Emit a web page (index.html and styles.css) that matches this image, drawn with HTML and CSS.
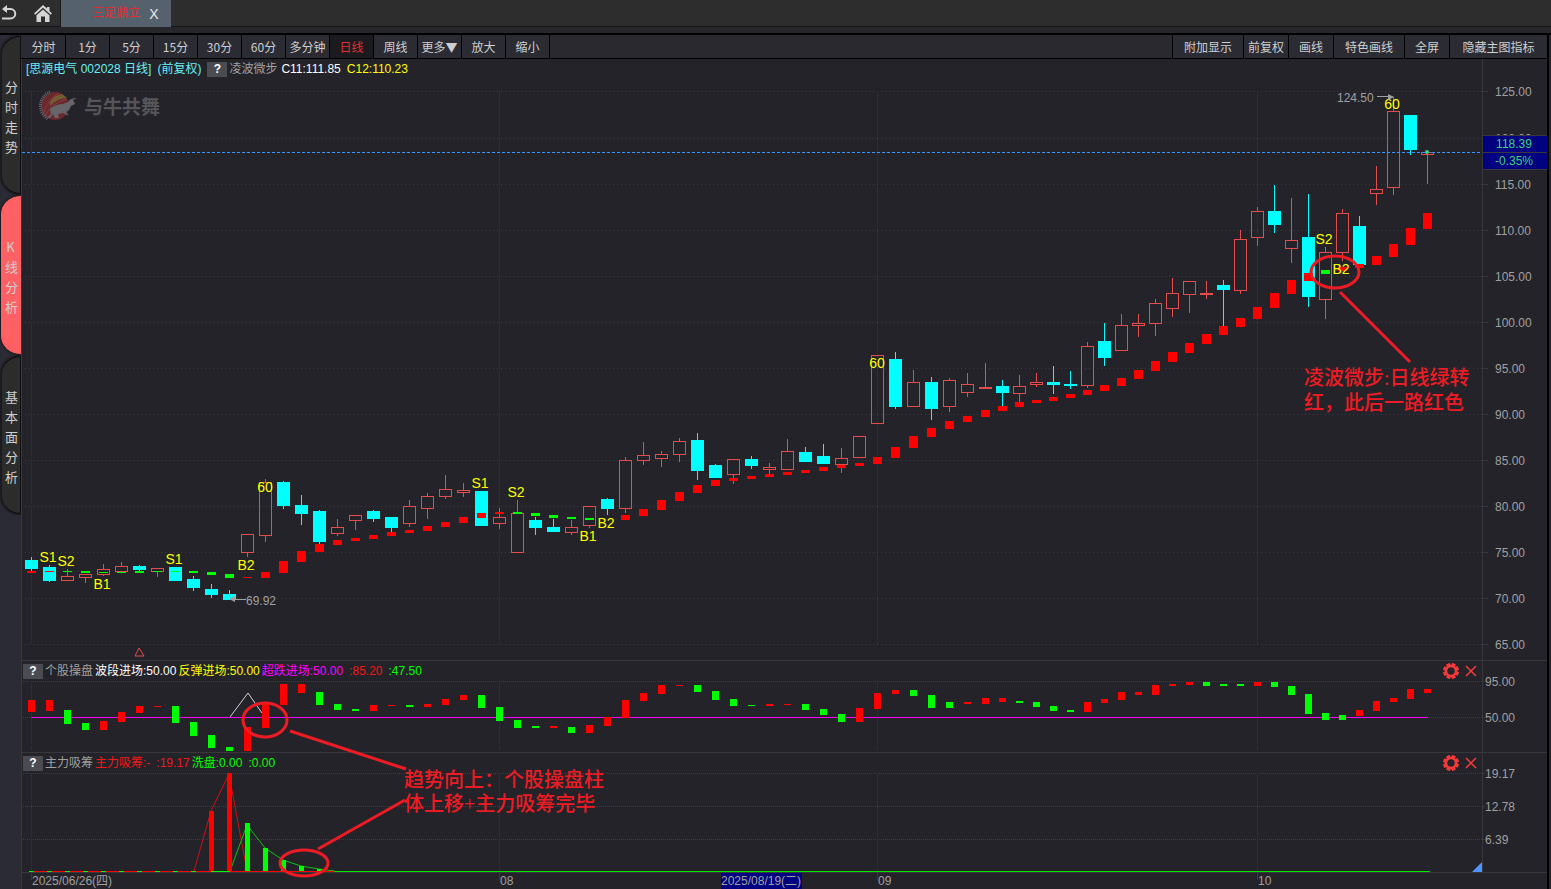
FILE: index.html
```
<!DOCTYPE html>
<html lang="zh-CN">
  <head>
    <meta charset="UTF-8" />
    <meta name="viewport" content="width=device-width, initial-scale=1.0" />
    <title>思源电气 002028 日线</title>

    <link rel="stylesheet" href="styles.css">
  </head>
  <body>
    <header class="topbar">
      <button class="icon-btn" aria-label="返回">
        <svg width="20" height="26" viewBox="0 0 20 26">
          <path d="M5 9H10.5A4.500 4.500 0 0 1 10.500 18.500H2" fill="none" stroke="#d4d4d4" stroke-width="2" />
          <path d="M2 9L7 5V13Z" fill="#d4d4d4" />
        </svg>
      </button>
      <button class="icon-btn is-home" aria-label="首页">
        <svg width="18" height="18" viewBox="0 0 18 18" fill="#d4d4d4">
          <path d="M9 0L13 3.600V2H15.500V6L18 8.500L16.800 9.800L9 2.800L1.200 9.800L0 8.500Z" />
          <path d="M9 4.500L15.500 10.300V17H11V11.500H7V17H2.500V10.300Z" />
        </svg>
      </button>
      <div class="tab">
        <a href="#">三足鼎立</a>
        <button aria-label="关闭">X</button>
      </div>
    </header>

    <main>
      <nav class="side">
        <button>分时走势</button>
        <button class="is-active">K线分析</button>
        <button>基本面分析</button>
      </nav>

      <section class="workspace">
        <div class="toolbar">
          <button>分时</button>
          <button>1分</button>
          <button>5分</button>
          <button>15分</button>
          <button>30分</button>
          <button>60分</button>
          <button>多分钟</button>
          <button class="is-active">日线</button>
          <button>周线</button>
          <button>更多▼</button>
          <button>放大</button>
          <button>缩小</button>
          <span class="spacer"></span>
          <button class="is-wide">附加显示</button>
          <button>前复权</button>
          <button>画线</button>
          <button class="is-wide">特色画线</button>
          <button>全屏</button>
          <button class="is-wider">隐藏主图指标</button>
        </div>

        <div class="stage">
          <svg id="chart" role="img" aria-label="思源电气日线图"></svg>

          <div class="panel">
            <div class="panel-head is-main">
              <span class="cyan">[思源电气 002028 日线]</span>
              <span class="cyan">(前复权)</span>
              <button class="help">?</button>
              <span class="gray">凌波微步</span>
              <span class="white">C11:111.85</span>
              <span class="yellow">C12:110.23</span>
            </div>
          </div>

          <div class="panel">
            <div class="panel-head">
              <button class="help">?</button>
              <span class="gray">个股操盘</span>
              <span class="white">波段进场:50.00</span>
              <span class="yellow">反弹进场:50.00</span>
              <span class="magenta">超跌进场:50.00</span>
              <span class="red is-extra">:85.20</span>
              <span class="green is-extra">:47.50</span>
              <div class="tools">
                <button aria-label="设置"><svg class="gear" width="16" height="16" viewBox="-8 -8 16 16"></svg></button>
                <button aria-label="关闭指标"><svg width="12" height="12" viewBox="0 0 12 12"><path d="M1 1L11 11M11 1L1 11" stroke="#f43a3a" stroke-width="1.500" /></svg></button>
              </div>
            </div>
          </div>

          <div class="panel">
            <div class="panel-head">
              <button class="help">?</button>
              <span class="gray">主力吸筹</span>
              <span class="red">主力吸筹:-</span>
              <span class="red is-extra">:19.17</span>
              <span class="green">洗盘:0.00</span>
              <span class="green is-extra">:0.00</span>
              <div class="tools">
                <button aria-label="设置"><svg class="gear" width="16" height="16" viewBox="-8 -8 16 16"></svg></button>
                <button aria-label="关闭指标"><svg width="12" height="12" viewBox="0 0 12 12"><path d="M1 1L11 11M11 1L1 11" stroke="#f43a3a" stroke-width="1.500" /></svg></button>
              </div>
            </div>
          </div>
        </div>
      </section>
    </main>

    <script src="chart.js"></script>
  </body>
</html>
```
FILE: styles.css
```
*,
*::before,
*::after {
  box-sizing: border-box;
  margin: 0;
  padding: 0;
}

body {
  font-family: 'Liberation Sans', 'Noto Sans CJK SC', sans-serif;
  font-size: 12px;
  color: #cfcfcf;
  background: #26262b;
  display: flex;
  flex-direction: column;
  min-height: 100vh;
}

button {
  font: inherit;
  color: inherit;
  background: none;
  border: 0;
  cursor: pointer;
}

.topbar {
  display: flex;
  height: 27px;
  background: #2d2d2d;
  border-bottom: 1px solid #151515;

  & .icon-btn {
    width: 20px;
    height: 26px;
  }

  & .is-home {
    width: 40px;
    padding: 4px 0 0 6px;
  }
}

.tab {
  display: flex;
  align-items: center;
  gap: 8px;
  width: 111px;
  height: 27px;
  padding-left: 31px;
  background: #55626d;
  border-left: 1px solid #1a1a1a;

  & a {
    font-family: 'Noto Sans CJK SC', sans-serif;
    line-height: 24px;
    height: 27px;
    color: #e52b2b;
    text-decoration: none;
  }

  & button {
    width: 12px;
    font-size: 14px;
    color: #e8e8e8;
  }
}

main {
  flex: 1;
  display: flex;
  margin-top: 6px;
  padding-right: 2px;
  border-top: 2px solid #000;
}

.side {
  display: flex;
  flex-direction: column;
  gap: 2px;
  width: 21px;
  padding: 1px 0 0 1px;
  background: #2b2b35;

  & button {
    width: 20px;
    min-height: 158px;
    padding: 3px 4px 0 3px;
    border: 1px solid #111;
    border-left-color: #1a1a1a;
    border-radius: 20px 0 0 20px / 18px 0 0 18px;
    background: #2c2c2c;
    font-family: 'Noto Sans CJK SC', sans-serif;
    font-size: 13px;
    line-height: 20px;
    word-break: break-all;
    box-shadow: 0 0 3px #000;
  }

  & .is-active {
    background: #ff6064;
    border-color: #ff6064;
  }
}

.workspace {
  flex: 1;
  display: flex;
  flex-direction: column;
  border-right: 2px solid #000;
}

.toolbar {
  display: flex;
  height: 24px;
  padding-left: 1px;
  background: #29292f;
  border-bottom: 1px solid #000;

  & button {
    min-width: 44px;
    border-right: 1px solid #000;
    background: #2b2b33;
    font-family: 'Noto Sans CJK SC', sans-serif;
    line-height: 22px;
  }

  & .is-active {
    background: #1b1b1f;
    color: #e03030;
  }

  & .spacer {
    flex: 1;
    border-right: 1px solid #000;
  }

  & .spacer ~ button {
    min-width: 45px;
  }

  & .spacer ~ .is-wide {
    min-width: 71px;
  }

  & .spacer ~ .is-wider {
    min-width: 97px;
    border-right: 0;
  }
}

.stage {
  flex: 1;
  position: relative;
  display: grid;
  grid-template-rows: 602fr 92fr 136fr;
  background: #242329;
  border-left: 1px solid #37373c;

  & #chart {
    position: absolute;
    inset: 0;
    width: 100%;
    height: 100%;
  }
}

.panel-head {
  position: relative;
  display: flex;
  align-items: center;
  gap: 2px;
  height: 20px;
  padding-left: 1px;
  line-height: 18px;
  white-space: nowrap;

  &.is-main {
    gap: 6px;
    padding-left: 4px;

    & .gray {
      margin-left: -4px;
    }

    & .white {
      margin-left: -2px;
    }
  }

  & .help {
    width: 20px;
    height: 15px;
    background: #4b4c52;
    color: #fff;
    font-weight: bold;
    line-height: 15px;
  }

  & .is-extra {
    margin-left: 4px;
  }

  & .tools {
    display: flex;
    align-items: center;
    gap: 6px;
    margin-left: auto;
    padding-right: 70px;

    & button {
      display: flex;
    }
  }
}

.cyan { color: #66f0f5; }
.gray { color: #a0a0a0; }
.white { color: #fff; }
.yellow { color: #ff0; }
.magenta { color: #f0f; }
.red { color: #f01818; }
.green { color: #0f0; }

#chart {
  & text {
    fill: #a0a0a0;
  }

  & .mark {
    font-size: 14px;
    fill: #ff0;
    text-anchor: middle;
  }

  & .quote {
    fill: #3fd07c;
    text-anchor: middle;
  }

  & .note {
    font-family: 'Liberation Serif', 'Noto Sans CJK SC', serif;
    font-size: 20px;
    font-weight: 500;
    fill: #ed1c24;
  }

  & .brand {
    font-size: 19px;
    font-weight: bold;
    fill: #55555a;
  }

  & .sharp {
    shape-rendering: crispEdges;
  }
}
```
FILE: chart.js
```
const svg = document.getElementById('chart')

// Design space of the stage: left, top, width, height
const VIEW = { x: 22, y: 59, w: 1525, h: 830 }

const UP = '#e64c4c'
const DOWN = '#00ffff'
const RED = '#ff0000'
const GREEN = '#00ff00'
const LINE = '#37373c'
const NOTE = '#ed1c24'

// d/u, high, body top, body bottom, low
const candles = `d557 560 569 571,d565 567 581 582,u569 576 581 581,u574 574 578 583,u564 569 575 576
u562 566 572 572,d565 566 570 571,u568 568 572 577,d567 567 581 581,d576 579 588 591
d584 589 595 598,d590 594 600 600,u534 534 553 557,u479 482 536 542,d481 482 506 509
d495 505 514 525,d510 511 542 544,u519 527 534 536,u515 515 521 530,d510 511 519 522
d517 517 528 532,u500 506 524 527,u493 496 509 519,u475 489 497 499,u483 490 493 497
d491 491 526 526,u508 517 524 529,u500 513 553 553,d517 520 528 535,d519 527 532 532
u520 527 533 535,u506 506 526 528,d498 499 509 515,u457 460 509 513,u442 455 461 465
u451 454 459 467,u438 441 455 462,d433 440 471 480,d464 465 478 478,u459 459 475 484
d456 459 466 469,u463 467 470 474,u439 451 470 470,d447 452 462 462,d444 456 464 464
u448 458 465 473,u436 436 458 458,u355 355 424 424,d352 359 407 409,u370 382 407 407
d377 382 409 420,u378 380 407 412,u373 384 393 397,u363 387 389 389,d380 386 393 406
u375 386 394 402,u373 382 385 387,d366 382 385 394,d371 384 386 389
u342 346 386 388,d323 341 358 366,u314 325 351 351,u314 323 326 337,u299 303 324 336
u278 293 309 317,u281 281 295 313,u281 293 295 299,d280 285 290 326,u230 239 291 294
u207 211 238 246,d185 211 225 233,u198 240 249 263,d194 237 297 307,u247 252 300 319
u209 213 253 261,d216 226 265 265,u166 189 194 205,u97 111 188 195,d115 115 150 155
u152 152 155 184`

// r/g, top, bottom
const ribbon = `r571 573,r571 572,g571 572,g571 573,g572 573,g572 573,g571 573,g571 572,g571 572,g571 573
g572 575,g574 578,r577 578,r572 578,r561 573,r551 562,r544 552,r540 545,r538 541,r535 539
r532 536,r530 533,r526 531,r522 527,r517 523,r513 518,r512 514,g512 514,g513 516,g515 518
g517 519,g518 520,,r515 520,r509 516,r500 510,r492 501,r485 493,r480 486,r478 481
r476 479,r474 477,r472 475,r470 473,r467 471,r465 468,r463 466,r457 464,r447 458,r436 448
r428 437,r421 429,r416 422,r410 417,r406 411,r402 407,r400 403,r397 401,r394 398,r390 395
r385 391,r378 386,r370 379,r361 371,r352 362,r343 353,r334 344,r326 335,r318 327,r307 319
r293 308,r280 294,r273 281,g270 274,r267 271,r264 268,r256 265,r244 257,r228 245,r213 229`

const trend = `r700 712,r700 711,g710 724,g723 730,r721 730,r712 722,r706 713,r706 707,g706 723,g722 736
g735 748,g747 751,r727 751,r704 728,r684 705,r684 693,g692 705,g704 710,g709 711,r705 711
r705 706,g705 707,r704 707,r699 705,r695 700,g695 708,g707 721,g720 728,g726 728,r726 728
g727 733,r725 733,r717 726,r700 718,r693 701,r685 694,r685 686,g685 692,g691 700,g699 706
g705 706,r704 706,r704 705,g704 710,g709 715,g714 722,r708 722,r693 709,r690 694,g690 696
g695 708,g702 708,r702 704,r698 704,r698 702,g701 703,g702 707,g706 711,g710 712,r702 712
r699 703,r692 700,r692 695,r685 695,r684 686,r682 685,g682 686,g684 686,g684 686,r682 686
g682 687,g686 695,g694 714,g713 720,g715 720,r710 716,r701 711,r698 702,r689 699,r689 693`

const marks = [
  [48, 562, 'S1'], [66, 566, 'S2'], [102, 589, 'B1'], [174, 564, 'S1'],
  [246, 570, 'B2'], [265, 492, '60'], [480, 488, 'S1'], [516, 497, 'S2'],
  [588, 541, 'B1'], [606, 528, 'B2'], [877, 368, '60'], [1324, 244, 'S2'],
  [1341, 274, 'B2'], [1392, 109, '60']
]

const parse = (text) =>
  text.split(/[,\n]/).map((s) => (s ? [s[0], ...s.slice(1).split(' ').map(Number)] : null))

const barX = (i) => (i <= 53 ? 25 + 18 * i : 979 + 17 * (i - 53))

function draw() {
  const { width, height } = svg.getBoundingClientRect()
  const X = (x) => Math.round(((x - VIEW.x) * width) / VIEW.w)
  const Y = (y) => Math.round(((y - VIEW.y) * height) / VIEW.h)
  const out = []

  const rect = (x, y, w, h, fill) =>
    out.push(`<rect class="sharp" x="${X(x)}" y="${Y(y)}" width="${X(x + w) - X(x)}" height="${Math.max(1, Y(y + h) - Y(y))}" fill="${fill}"/>`)
  const box = (x, y, w, h, stroke) =>
    out.push(`<rect x="${X(x) + 0.5}" y="${Y(y) + 0.5}" width="${X(x + w) - X(x) - 1}" height="${Math.max(1, Y(y + h) - Y(y) - 1)}" fill="none" stroke="${stroke}"/>`)
  const hline = (x1, x2, y, stroke, dash = '') =>
    out.push(`<path class="sharp" d="M${X(x1)} ${Y(y) + 0.5}H${X(x2)}" stroke="${stroke}" stroke-dasharray="${dash}"/>`)
  const vline = (x, y1, y2, stroke, dash = '') =>
    out.push(`<path class="sharp" d="M${X(x) + 0.5} ${Y(y1)}V${Y(y2)}" stroke="${stroke}" stroke-dasharray="${dash}"/>`)
  const poly = (points, stroke, w = 1) =>
    out.push(`<polyline points="${points.map(([x, y]) => `${X(x)},${Y(y)}`).join(' ')}" fill="none" stroke="${stroke}" stroke-width="${w}"/>`)
  const text = (x, y, str, cls = '') =>
    out.push(`<text x="${X(x)}" y="${Y(y)}" class="${cls}">${str}</text>`)
  const ring = (x, y, rx, ry) =>
    out.push(`<ellipse cx="${X(x)}" cy="${Y(y)}" rx="${rx}" ry="${ry}" fill="none" stroke="${NOTE}" stroke-width="3"/>`)

  // Grid and price axis
  for (let i = 0; i <= 12; i++) {
    const y = i === 0 ? 91 : 92 + 46 * i
    hline(25, 1482, y, '#3b3b41', '1 3')
    hline(1482, 1488, y, LINE)
    text(1495, y + 5, (125 - 5 * i).toFixed(2))
  }
  for (const [y, label] of [[681, '95.00'], [717, '50.00'], [773, '19.17'], [806, '12.78'], [839, '6.39']]) {
    hline(23, 1482, y, '#3b3b41', '1 1')
    hline(1482, 1485, y, LINE)
    text(1485, y + 5, label)
  }
  for (const x of [31, 499, 877, 1257]) {
    vline(x, 91, 644, '#36363c', '1 1')
    vline(x, 681, 751, '#36363c', '1 1')
    vline(x, 773, 871, '#36363c', '1 1')
    vline(x, 872, 880, LINE)
  }
  for (const y of [660, 752, 872]) hline(22, 1547, y, LINE)
  vline(1482, 59, 872, LINE)

  // Watermark
  out.push(`<g transform="translate(${X(38)} ${Y(90)})" opacity="0.8">
    <circle cx="17" cy="16" r="14" fill="#7d2a2f"/>
    <path d="M12 12Q16 5 24 4L29 8Q20 8 12 16Z" fill="#8a6b35"/>
    <path d="M5 24Q9 10 21 3M7 26Q13 13 29 9" fill="none" stroke="#95494c" stroke-width="1"/>
    <path d="M12 2A15 15 0 0 0 10 29" fill="none" stroke="#77777b" stroke-width="3" stroke-dasharray="1 1"/>
    <path d="M9 28L13 24L12 19Q18 14 25 14L30 12Q32 8 39 8L35 10L37 14L33 16L31 20L28 22L31 26L25 23L20 24L21 28H17L15 24L12 28Z" fill="#77777b"/>
  </g>`)
  text(84, 114, '与牛共舞', 'brand')

  // Main panel
  parse(candles).forEach(([dir, high, top, bottom, low], i) => {
    const x = barX(i)
    if (dir === 'd') {
      vline(x + 6, high, low, DOWN)
      rect(x, top, 13, bottom - top, DOWN)
    } else {
      vline(x + 6, high, top, UP)
      vline(x + 6, bottom, low, UP)
      box(x, top, 13, bottom - top, UP)
    }
  })
  parse(ribbon).forEach((bar, i) => {
    if (bar) rect(barX(i) + 2, bar[1], 9, bar[2] - bar[1], bar[0] === 'r' ? RED : GREEN)
  })
  marks.forEach(([x, y, str]) => text(x, y, str, 'mark'))

  text(246, 605, '69.92')
  hline(232, 246, 599, '#a0a0a0')
  out.push(`<path d="M${X(229)} ${Y(599)}l6 -3v6z" fill="#a0a0a0"/>`)
  text(1337, 102, '124.50')
  hline(1377, 1393, 96, '#a0a0a0')
  out.push(`<path d="M${X(1394)} ${Y(97)}l-6 -3v6z" fill="#a0a0a0"/>`)
  out.push(`<path d="M${X(139)} ${Y(648)}l5 8h-9z" fill="none" stroke="${UP}"/>`)

  // Last price
  hline(22, 1482, 152, '#3399ff', '3 2')
  out.push(`<circle cx="${X(1427)}" cy="${Y(152)}" r="2" fill="#3fd07c"/>`)
  rect(1483, 136, 64, 16, '#000080')
  rect(1483, 153, 64, 16, '#000080')
  for (const y of [135, 152, 169]) hline(1483, 1547, y, LINE)
  text(1514, 148, '118.39', 'quote')
  text(1514, 165, '-0.35%', 'quote')

  // Trend panel
  hline(31, 1428, 717, '#ff00ff')
  poly([[230, 717], [248, 693], [262, 713]], '#d0d0d0')
  parse(trend).forEach(([dir, top, bottom], i) => {
    rect(barX(i) + 3, top, 7, bottom - top, dir === 'r' ? RED : GREEN)
  })

  // Volume absorption panel
  hline(31, 335, 871, RED)
  hline(211, 230, 871, GREEN)
  hline(335, 1430, 871, '#00e800')
  for (let i = 0; i < 10; i++) rect(barX(i) + 4, 871, 5, 1, GREEN)
  poly([[194, 871], [211, 811], [229, 774], [247, 871]], '#d01010')
  poly([[230, 871], [247, 825], [265, 848], [283, 860], [301, 866], [319, 869], [335, 871]], '#10c010')
  rect(209, 811, 5, 60, RED)
  rect(227, 773, 5, 98, RED)
  for (const [x, y] of [[245, 823], [263, 848], [281, 860], [299, 866], [317, 869]]) {
    rect(x, y, 5, 871 - y, GREEN)
  }
  out.push(`<path d="M${X(1482)} ${Y(862)}v10h-10z" fill="#4d94ff"/>`)

  // Time axis
  rect(721, 873, 81, 16, '#000080')
  text(32, 885, '2025/06/26(四)')
  text(500, 885, '08')
  text(721, 885, '2025/08/19(二)')
  text(878, 885, '09')
  text(1258, 885, '10')

  // Hand drawn notes
  ring(1335, 272, 24, 16)
  poly([[1340, 292], [1410, 362]], NOTE, 3)
  text(1304, 385, '凌波微步:日线绿转', 'note')
  text(1304, 410, '红，此后一路红色', 'note')
  ring(265, 720, 22, 17)
  poly([[290, 731], [406, 769]], NOTE, 3)
  ring(304, 863, 24, 13)
  poly([[318, 849], [405, 800]], NOTE, 3)
  text(404, 787, '趋势向上：个股操盘柱', 'note')
  text(404, 811, '体上移+主力吸筹完毕', 'note')

  svg.innerHTML = out.join('')
}

// Gear: a ring with eight teeth
document.querySelectorAll('.gear').forEach((el) => {
  let teeth = ''
  for (let a = 0; a < 360; a += 45) {
    teeth += `<rect x="-2" y="-8" width="4" height="4" fill="#f43a3a" transform="rotate(${a + 22})"/>`
  }
  el.innerHTML = `${teeth}<circle r="5" fill="none" stroke="#f43a3a" stroke-width="2.500"/>`
})

draw()
window.addEventListener('resize', draw)
```
